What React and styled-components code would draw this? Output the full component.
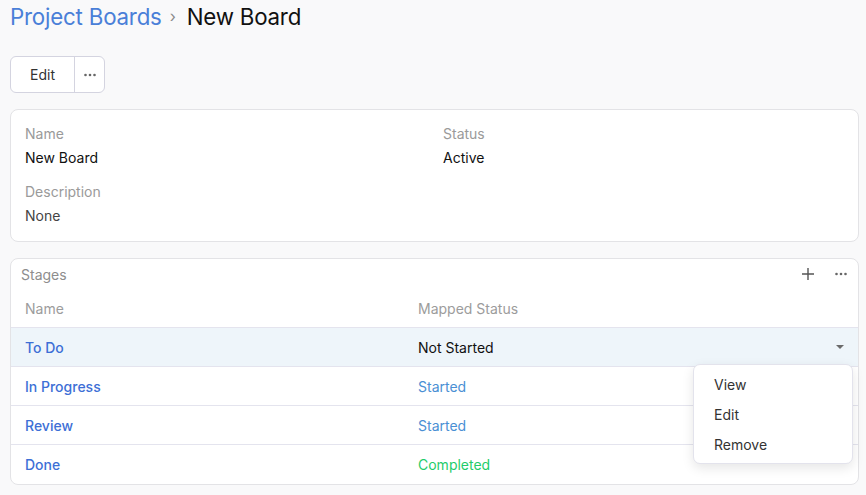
import React from 'react';
import styled, { createGlobalStyle } from 'styled-components';

const GlobalStyle = createGlobalStyle`
  body {
    margin: 0;
    background: #f9f9fa;
    font-family: Inter, "Noto Sans", sans-serif;
    color: #1f1f1f;
  }
`;

const Page = styled.div`
  padding: 0 7px 0 10px;
`;

const Breadcrumb = styled.div`
  display: flex;
  align-items: center;
  height: 32px;
  font-size: 22.3px;
  letter-spacing: -0.2px;
`;

const Crumb = styled.span`
  color: ${p => (p.link ? '#4a7fd8' : '#111')};
`;

const Chevron = styled.span`
  color: #8a8a8a;
  font-size: 16px;
  margin: 0 11px 0 8px;
`;

const ButtonGroup = styled.div`
  display: inline-flex;
  margin-top: 24px;
  height: 35px;
  border: 1px solid #d4d4e0;
  border-radius: 6px;
  background: #fff;
  overflow: hidden;
`;

const GroupButton = styled.button`
  border: none;
  background: transparent;
  font-family: inherit;
  font-size: 14px;
  color: #333;
  width: ${p => p.w}px;
  padding: 0;
  display: flex;
  align-items: center;
  justify-content: center;
  & + & {
    border-left: 1px solid #d4d4e0;
  }
`;

const Card = styled.div`
  position: relative;
  margin-top: ${p => p.mt}px;
  background: #fff;
  border: 1px solid #e3e3e6;
  border-radius: 8px;
`;

const FieldGrid = styled.div`
  display: grid;
  grid-template-columns: 404px 1fr;
  column-gap: 14px;
  row-gap: 14px;
  padding: 14px 14px 15px;
`;

const Field = styled.div`
  display: flex;
  flex-direction: column;
  gap: 4px;
  font-size: 14px;
  line-height: 20px;
`;

const Label = styled.div`
  color: #9a9a9a;
`;

const Value = styled.div`
  color: ${p => p.muted ? '#444' : '#111'};
`;

const StagesHeader = styled.div`
  display: flex;
  align-items: center;
  justify-content: space-between;
  height: 30px;
  padding: 0 10px 0 10px;
  font-size: 14px;
  color: #8d8d8d;
`;

const HeaderIcons = styled.div`
  display: flex;
  align-items: center;
  gap: 19px;
  color: #555;
`;

const Row = styled.div`
  display: grid;
  grid-template-columns: 393px 1fr 36px;
  align-items: center;
  height: ${p => (p.last ? 39 : 38)}px;
  padding: 0 0 0 14px;
  font-size: 14px;
  background: ${p => (p.active ? '#eef5fa' : 'transparent')};
  border-bottom: ${p => (p.last ? 'none' : '1px solid #e4e4ee')};
  border-radius: ${p => (p.last ? '0 0 8px 8px' : '0')};
`;

const HeadCell = styled.div`
  color: #9c9c9c;
`;

const NameCell = styled.div`
  color: #3d6fd6;
  font-weight: 500;
`;

const StatusCell = styled.div`
  color: ${p => p.color};
`;

const Caret = styled.div`
  display: flex;
  justify-content: flex-start;
  padding-left: 13px;
`;

const Menu = styled.div`
  position: absolute;
  left: 682px;
  top: 105px;
  width: 158px;
  padding: 4px 0;
  background: #fff;
  border: 1px solid #e3e3ec;
  border-radius: 7px;
  box-shadow: 0 4px 12px rgba(0, 0, 0, 0.1);
`;

const MenuItem = styled.div`
  height: 30px;
  display: flex;
  align-items: center;
  padding-left: 20px;
  font-size: 14px;
  color: #333;
`;

const Dots = ({ color = '#666' }) => (
  <svg width="14" height="4" viewBox="0 0 14 4">
    <circle cx="2.5" cy="2" r="1.3" fill={color} />
    <circle cx="7" cy="2" r="1.3" fill={color} />
    <circle cx="11.5" cy="2" r="1.3" fill={color} />
  </svg>
);

const Plus = () => (
  <svg width="14" height="14" viewBox="0 0 14 14">
    <path d="M7 1v12M1 7h12" stroke="#555" strokeWidth="1.4" />
  </svg>
);

const DownCaret = () => (
  <svg width="10" height="6" viewBox="0 0 10 6">
    <path d="M1 1h8L5 5z" fill="#6a6a6a" />
  </svg>
);

const stages = [
  { name: 'To Do', status: 'Not Started', color: '#111', active: true },
  { name: 'In Progress', status: 'Started', color: '#4a8fd4' },
  { name: 'Review', status: 'Started', color: '#4a8fd4' },
  { name: 'Done', status: 'Completed', color: '#1fcc6a' },
];

export default function App() {
  return (
    <>
      <GlobalStyle />
      <Page>
        <Breadcrumb>
          <Crumb link>Project Boards</Crumb>
          <Chevron>›</Chevron>
          <Crumb>New Board</Crumb>
        </Breadcrumb>
        <ButtonGroup>
          <GroupButton w={63}>Edit</GroupButton>
          <GroupButton w={30}><Dots /></GroupButton>
        </ButtonGroup>

        <Card mt={16}>
          <FieldGrid>
            <Field>
              <Label>Name</Label>
              <Value>New Board</Value>
            </Field>
            <Field>
              <Label>Status</Label>
              <Value>Active</Value>
            </Field>
            <Field>
              <Label>Description</Label>
              <Value muted>None</Value>
            </Field>
          </FieldGrid>
        </Card>

        <Card mt={16}>
          <StagesHeader>
            <span>Stages</span>
            <HeaderIcons>
              <Plus />
              <Dots />
            </HeaderIcons>
          </StagesHeader>
          <Row head>
            <HeadCell>Name</HeadCell>
            <HeadCell>Mapped Status</HeadCell>
          </Row>
          {stages.map((s, i) => (
            <Row key={s.name} active={s.active} last={i === stages.length - 1}>
              <NameCell>{s.name}</NameCell>
              <StatusCell color={s.color}>{s.status}</StatusCell>
              <Caret>{s.active && <DownCaret />}</Caret>
            </Row>
          ))}
          <Menu>
            <MenuItem>View</MenuItem>
            <MenuItem>Edit</MenuItem>
            <MenuItem>Remove</MenuItem>
          </Menu>
        </Card>
      </Page>
    </>
  );
}
